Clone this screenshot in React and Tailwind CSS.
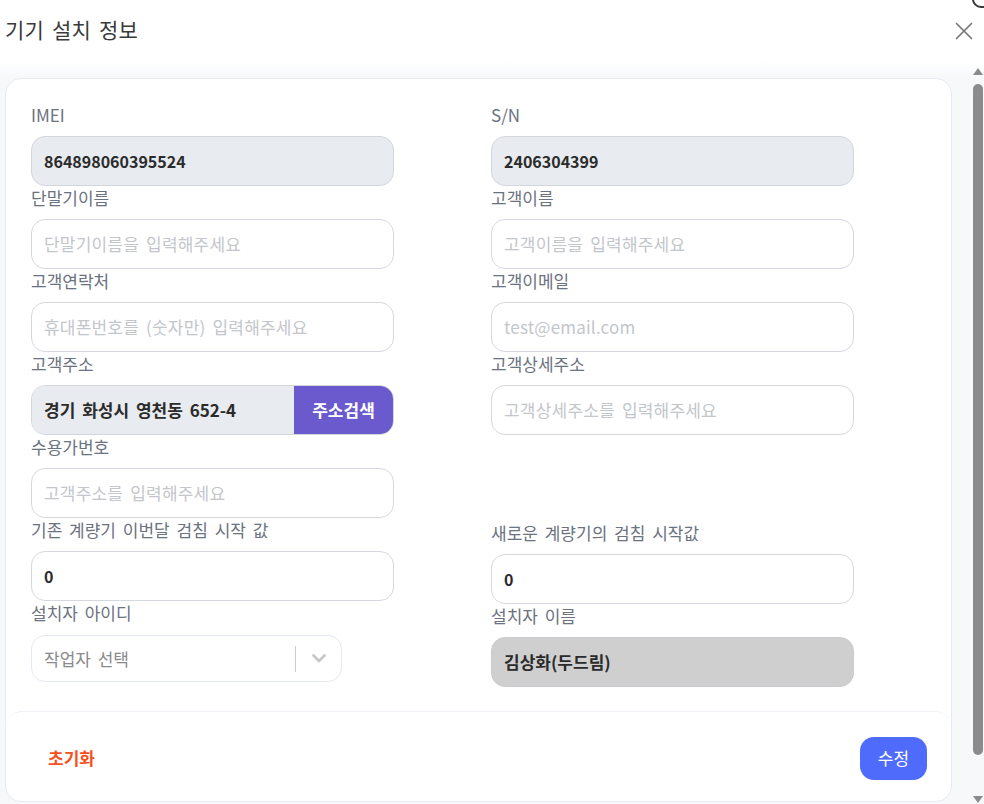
import React from "react";

const font = { fontFamily: '"Noto Sans CJK KR", "Noto Sans", sans-serif' };

function Label({ children }) {
  return (
    <div className="h-[23px] leading-[23px] text-[17px] text-[#6b7280] whitespace-nowrap">
      {children}
    </div>
  );
}

function Field({ label, value, placeholder, variant = "plain", numeric = false, className = "" }) {
  const box =
    variant === "locked"
      ? "bg-[#e8ebef] border-[#d3d7dd]"
      : variant === "dim"
      ? "bg-[#cfcfcf] border-[#c9ccd1]"
      : "bg-white border-[#d5d9df]";
  return (
    <div className={className}>
      <Label>{label}</Label>
      <div
        className={`mt-[10px] h-[50px] rounded-[14px] border flex items-center px-[12px] ${box}`}
      >
        {value ? (
          <span className={`font-bold text-[#2b2b2b] ${numeric ? "text-[16px]" : "text-[17px]"}`}>{value}</span>
        ) : (
          <span className="text-[#c3c6cb] text-[17px] whitespace-nowrap tracking-[0.2px]">{placeholder}</span>
        )}
      </div>
    </div>
  );
}

function AddressField() {
  return (
    <div>
      <Label>고객주소</Label>
      <div className="mt-[10px] h-[50px] flex rounded-[14px] border border-[#d3d7dd] overflow-hidden">
        <div className="flex-1 bg-[#e8ebef] flex items-center px-[12px] text-[17px] font-bold text-[#2b2b2b]">
          경기 화성시 영천동 652-4
        </div>
        <button className="w-[99px] bg-[#6a5acd] text-white font-bold text-[17px]">주소검색</button>
      </div>
    </div>
  );
}

function WorkerSelect() {
  return (
    <div>
      <Label>설치자 아이디</Label>
      <div className="mt-[11px] h-[47px] w-[311px] rounded-[14px] border border-[#e4e8f0] flex items-center">
        <span className="flex-1 pl-[12px] text-[17px] text-[#8a8a8a]">작업자 선택</span>
        <div className="w-px h-[26px] bg-[#cccccc]" />
        <div className="w-[45px] flex justify-center">
          <svg width="14" height="9" viewBox="0 0 14 9" fill="none">
            <path d="M1.5 1.5 7 7l5.5-5.5" stroke="#c6c6c6" strokeWidth="2.6" strokeLinecap="round" strokeLinejoin="round" />
          </svg>
        </div>
      </div>
    </div>
  );
}

function ScrollTrack() {
  return (
    <div className="w-[12px] flex flex-col items-center pt-[6px]">
      <svg width="10" height="7" viewBox="0 0 10 7">
        <path d="M5 0 10 7H0z" fill="#8b8b8b" />
      </svg>
      <div className="mt-[9px] w-[10px] h-[671px] rounded-full bg-[#8b8b8b]" />
      <div className="flex-1" />
      <svg width="10" height="7" viewBox="0 0 10 7" className="mb-[1px]">
        <path d="M0 0h10L5 7z" fill="#8b8b8b" />
      </svg>
    </div>
  );
}

export default function App() {
  return (
    <div style={font} className="relative w-[984px] h-[804px] bg-white flex flex-col overflow-hidden [word-spacing:3px]">
      <div className="absolute -top-[10px] -right-[10px] w-[22px] h-[18px] rounded-full border-[2px] border-[#3a3a3a]" />

      <header className="h-[62px] flex items-center justify-between pl-[5px] pr-[11px] shrink-0">
        <h1 className="text-[21px] text-[#3a3a3a] font-normal pb-[2px] tracking-[0.2px]">기기 설치 정보</h1>
        <svg width="18" height="18" viewBox="0 0 18 18" fill="none">
          <path d="M1.5 1.5 16.5 16.5M16.5 1.5 1.5 16.5" stroke="#777777" strokeWidth="1.7" strokeLinecap="round" />
        </svg>
      </header>

      <div className="flex-1 flex bg-[linear-gradient(to_bottom,#ffffff,#f7f8fa_16px,#f7f8fa)]">
        <div className="flex-1 pl-[5px] pt-[16px] pr-[20px]">
          <div className="h-[724px] bg-white rounded-2xl border border-[#e6ebf3] flex flex-col">
            <div className="flex-1 flex pl-[25px] pt-[24px]">
              <div className="w-[363px] flex flex-col">
                <Field label="IMEI" value="864898060395524" variant="locked" numeric />
                <Field label="단말기이름" placeholder="단말기이름을 입력해주세요" />
                <Field label="고객연락처" placeholder="휴대폰번호를 (숫자만) 입력해주세요" />
                <AddressField />
                <Field label="수용가번호" placeholder="고객주소를 입력해주세요" />
                <Field label="기존 계량기 이번달 검침 시작 값" value="0" numeric />
                <WorkerSelect />
              </div>
              <div className="w-[363px] ml-[97px] flex flex-col">
                <Field label="S/N" value="2406304399" variant="locked" numeric />
                <Field label="고객이름" placeholder="고객이름을 입력해주세요" />
                <Field label="고객이메일" placeholder="test@email.com" />
                <Field label="고객상세주소" placeholder="고객상세주소를 입력해주세요" />
                <div className="h-[83px]" />
                <Field label="새로운 계량기의 검침 시작값" value="0" numeric className="mt-[3px]" />
                <Field label="설치자 이름" value="김상화(두드림)" variant="dim" />
              </div>
            </div>
            <div className="h-[90px] shrink-0 rounded-2xl border-t border-[#eef1f6] flex items-center justify-between pl-[42px] pr-[24px] pt-[3px]">
              <button className="text-[17px] font-bold text-[#f4511e]">초기화</button>
              <button className="w-[67px] h-[43px] rounded-[14px] bg-[#4f6bfb] text-white text-[17px]">수정</button>
            </div>
          </div>
        </div>
        <ScrollTrack />
      </div>
    </div>
  );
}
